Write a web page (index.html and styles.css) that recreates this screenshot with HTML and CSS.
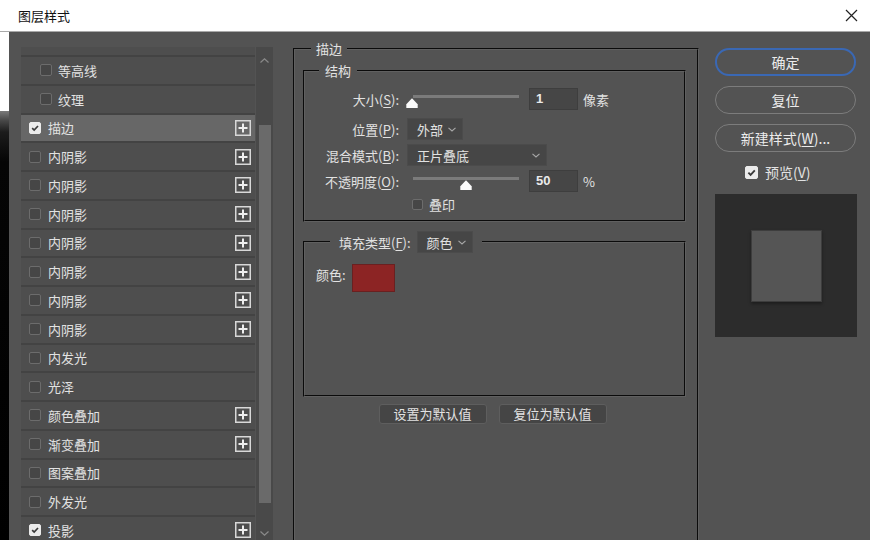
FILE: index.html
```html
<!DOCTYPE html>
<html lang="zh-CN">
<head>
<meta charset="utf-8">
<title>图层样式</title>
<link rel="stylesheet" href="styles.css">
</head>
<body>
<div class="window">
  <header class="titlebar">
    <span class="title">图层样式</span>
    <svg class="close" width="13" height="13" viewBox="0 0 13 13"><path d="M1 1L12 12M12 1L1 12" stroke="#222" stroke-width="1.2"/></svg>
  </header>
  <div class="main">
    <div class="strip"></div>
    <div class="dialog">
      <div class="left">
        <div class="list">
          <div class="list-inner">
            <div class="row"></div>
            <div class="row sub"><span class="cb"></span><span class="txt">等高线</span></div>
            <div class="row sub"><span class="cb"></span><span class="txt">纹理</span></div>
            <div class="row sel"><span class="cb on"><svg viewBox="0 0 12 12"><path d="M2.6 6.2L5 8.6L9.6 3.6" stroke="#3a3a3a" stroke-width="2" fill="none"/></svg></span><span class="txt">描边</span><svg class="plus" viewBox="0 0 16 16"><rect x="0.75" y="0.75" width="14.5" height="14.5" fill="none" stroke="#d8d8d8" stroke-width="1.5"/><path d="M8 3.5V12.5M3.5 8H12.5" stroke="#eee" stroke-width="2"/></svg></div>
            <div class="row"><span class="cb"></span><span class="txt">内阴影</span><svg class="plus" viewBox="0 0 16 16"><rect x="0.75" y="0.75" width="14.5" height="14.5" fill="none" stroke="#d8d8d8" stroke-width="1.5"/><path d="M8 3.5V12.5M3.5 8H12.5" stroke="#eee" stroke-width="2"/></svg></div>
            <div class="row"><span class="cb"></span><span class="txt">内阴影</span><svg class="plus" viewBox="0 0 16 16"><rect x="0.75" y="0.75" width="14.5" height="14.5" fill="none" stroke="#d8d8d8" stroke-width="1.5"/><path d="M8 3.5V12.5M3.5 8H12.5" stroke="#eee" stroke-width="2"/></svg></div>
            <div class="row"><span class="cb"></span><span class="txt">内阴影</span><svg class="plus" viewBox="0 0 16 16"><rect x="0.75" y="0.75" width="14.5" height="14.5" fill="none" stroke="#d8d8d8" stroke-width="1.5"/><path d="M8 3.5V12.5M3.5 8H12.5" stroke="#eee" stroke-width="2"/></svg></div>
            <div class="row"><span class="cb"></span><span class="txt">内阴影</span><svg class="plus" viewBox="0 0 16 16"><rect x="0.75" y="0.75" width="14.5" height="14.5" fill="none" stroke="#d8d8d8" stroke-width="1.5"/><path d="M8 3.5V12.5M3.5 8H12.5" stroke="#eee" stroke-width="2"/></svg></div>
            <div class="row"><span class="cb"></span><span class="txt">内阴影</span><svg class="plus" viewBox="0 0 16 16"><rect x="0.75" y="0.75" width="14.5" height="14.5" fill="none" stroke="#d8d8d8" stroke-width="1.5"/><path d="M8 3.5V12.5M3.5 8H12.5" stroke="#eee" stroke-width="2"/></svg></div>
            <div class="row"><span class="cb"></span><span class="txt">内阴影</span><svg class="plus" viewBox="0 0 16 16"><rect x="0.75" y="0.75" width="14.5" height="14.5" fill="none" stroke="#d8d8d8" stroke-width="1.5"/><path d="M8 3.5V12.5M3.5 8H12.5" stroke="#eee" stroke-width="2"/></svg></div>
            <div class="row"><span class="cb"></span><span class="txt">内阴影</span><svg class="plus" viewBox="0 0 16 16"><rect x="0.75" y="0.75" width="14.5" height="14.5" fill="none" stroke="#d8d8d8" stroke-width="1.5"/><path d="M8 3.5V12.5M3.5 8H12.5" stroke="#eee" stroke-width="2"/></svg></div>
            <div class="row"><span class="cb"></span><span class="txt">内发光</span></div>
            <div class="row"><span class="cb"></span><span class="txt">光泽</span></div>
            <div class="row"><span class="cb"></span><span class="txt">颜色叠加</span><svg class="plus" viewBox="0 0 16 16"><rect x="0.75" y="0.75" width="14.5" height="14.5" fill="none" stroke="#d8d8d8" stroke-width="1.5"/><path d="M8 3.5V12.5M3.5 8H12.5" stroke="#eee" stroke-width="2"/></svg></div>
            <div class="row"><span class="cb"></span><span class="txt">渐变叠加</span><svg class="plus" viewBox="0 0 16 16"><rect x="0.75" y="0.75" width="14.5" height="14.5" fill="none" stroke="#d8d8d8" stroke-width="1.5"/><path d="M8 3.5V12.5M3.5 8H12.5" stroke="#eee" stroke-width="2"/></svg></div>
            <div class="row"><span class="cb"></span><span class="txt">图案叠加</span></div>
            <div class="row"><span class="cb"></span><span class="txt">外发光</span></div>
            <div class="row"><span class="cb on"><svg viewBox="0 0 12 12"><path d="M2.6 6.2L5 8.6L9.6 3.6" stroke="#3a3a3a" stroke-width="2" fill="none"/></svg></span><span class="txt">投影</span><svg class="plus" viewBox="0 0 16 16"><rect x="0.75" y="0.75" width="14.5" height="14.5" fill="none" stroke="#d8d8d8" stroke-width="1.5"/><path d="M8 3.5V12.5M3.5 8H12.5" stroke="#eee" stroke-width="2"/></svg></div>
          </div>
        </div>
        <div class="scrollbar">
          <div class="arrow up"><svg width="9" height="5" viewBox="0 0 9 5"><path d="M0.5 4.5L4.5 0.8L8.5 4.5" stroke="#8a8a8a" stroke-width="1.2" fill="none"/></svg></div>
          <div class="thumb-bar"></div>
          <div class="arrow down"><svg width="9" height="5" viewBox="0 0 9 5"><path d="M0.5 0.5L4.5 4.2L8.5 0.5" stroke="#8a8a8a" stroke-width="1.2" fill="none"/></svg></div>
        </div>
      </div>

      <fieldset class="fs-outer">
        <legend class="lg-outer">描边</legend>
        <fieldset class="fs-struct">
          <legend class="lg-struct">结构</legend>
          <div class="frow r1">
            <span class="lbl">大小(<u>S</u>):</span>
            <div class="slider"><div class="track"></div><svg class="sthumb" style="left: calc(1% - 8px)" width="12" height="10" viewBox="0 0 12 10"><path d="M6 0.3L11.7 6.2V10H0.3V6.2Z" fill="#fafafa"/></svg></div>
            <div class="num">1</div>
            <span class="unit">像素</span>
          </div>
          <div class="frow r2">
            <span class="lbl">位置(<u>P</u>):</span>
            <div class="select w-pos"><span>外部</span><svg width="8" height="5" viewBox="0 0 8 5"><path d="M0.5 0.8L4 4L7.5 0.8" stroke="#a8a8a8" stroke-width="1.1" fill="none"/></svg></div>
          </div>
          <div class="frow r3">
            <span class="lbl">混合模式(<u>B</u>):</span>
            <div class="select w-mode"><span>正片叠底</span><svg width="8" height="5" viewBox="0 0 8 5"><path d="M0.5 0.8L4 4L7.5 0.8" stroke="#a8a8a8" stroke-width="1.1" fill="none"/></svg></div>
          </div>
          <div class="frow r4">
            <span class="lbl">不透明度(<u>O</u>):</span>
            <div class="slider"><div class="track"></div><svg class="sthumb" style="left: calc(50% - 6px)" width="12" height="10" viewBox="0 0 12 10"><path d="M6 0.3L11.7 6.2V10H0.3V6.2Z" fill="#fafafa"/></svg></div>
            <div class="num">50</div>
            <span class="unit">%</span>
          </div>
          <div class="frow r5">
            <span class="cb small"></span><span class="ov">叠印</span>
          </div>
        </fieldset>

        <fieldset class="fs-fill">
          <legend class="lg-fill"><span class="lg-fill-in"><span class="fill-lbl">填充类型(<u>F</u>):</span><span class="select w-fill"><span>颜色</span><svg width="8" height="5" viewBox="0 0 8 5"><path d="M0.5 0.8L4 4L7.5 0.8" stroke="#a8a8a8" stroke-width="1.1" fill="none"/></svg></span></span></legend>
          <div class="color-row">
            <span class="clbl">颜色:</span>
            <span class="swatch"></span>
          </div>
        </fieldset>

        <div class="defaults">
          <button class="dbtn">设置为默认值</button>
          <button class="dbtn">复位为默认值</button>
        </div>
      </fieldset>

      <div class="right">
        <button class="pill ok">确定</button>
        <button class="pill">复位</button>
        <button class="pill">新建样式(<u>W</u>)...</button>
        <div class="preview-row"><span class="cb on big"><svg viewBox="0 0 12 12"><path d="M2.6 6.2L5 8.6L9.6 3.6" stroke="#3a3a3a" stroke-width="2" fill="none"/></svg></span><span>预览(<u>V</u>)</span></div>
        <div class="preview"><div class="sq"></div></div>
      </div>
    </div>
  </div>
</div>
</body>
</html>
```

FILE: styles.css
```css
* { box-sizing: border-box; }
html, body {
  margin: 0;
  padding: 0;
  width: 870px;
  height: 540px;
  overflow: hidden;
  background: #000;
}
body {
  font-family: "Noto Sans CJK SC", "Noto Sans", sans-serif;
  font-size: 13px;
  color: #e2e2e2;
}
u { text-decoration-thickness: 1px; text-underline-offset: 2px; }

.window {
  width: 870px;
  height: 540px;
  display: flex;
  flex-direction: column;
}
.titlebar {
  height: 32px;
  flex: none;
  background: #fff;
  border-bottom: 1px solid #a9a9a9;
  display: flex;
  align-items: center;
  padding-left: 18px;
  padding-right: 12px;
}
.title {
  color: #111;
  font-size: 13px;
  flex: 1;
}
.close { display: block; }

.main {
  flex: 1;
  display: flex;
  min-height: 0;
}
.strip {
  width: 9px;
  flex: none;
  background: linear-gradient(#fff 0, #fff 79px, #7a7a7a 79px, #4a4a4a 88px, #1c1c1c 100px, #050505 130px, #000 100%);
}
.dialog {
  flex: 1;
  background: #535353;
  display: flex;
  overflow: hidden;
}

/* left list */
.left {
  width: 284px;
  flex: none;
  padding: 15px 0 0 12px;
  display: flex;
  align-items: flex-start;
}
.list {
  width: 234px;
  height: 520px;
  overflow: hidden;
  background: #434343;
}
.list-inner {
  margin-top: -18.75px;
  display: flex;
  flex-direction: column;
  gap: 2px;
}
.row {
  height: 26.75px;
  background: #4e4e4e;
  display: flex;
  align-items: center;
  padding-left: 8px;
  padding-right: 4px;
  flex: none;
}
.row.sub { padding-left: 19px; }
.row.sel { background: #676767; }
.row .txt { margin-left: 7px; }
.row.sub .txt { margin-left: 6px; }
.cb {
  width: 12px;
  height: 12px;
  flex: none;
  border: 1px solid #6c6c6c;
  background: #464646;
  border-radius: 2px;
  display: inline-flex;
}
.cb.on {
  background: #ebebeb;
  border-color: #ebebeb;
}
.cb svg { width: 100%; height: 100%; display: block; }
.cb.big { width: 13px; height: 13px; }
.plus {
  width: 16px;
  height: 16px;
  margin-left: auto;
  flex: none;
}

.scrollbar {
  width: 17px;
  height: 520px;
  flex: none;
  margin-left: 1px;
  background: #494949;
  display: flex;
  flex-direction: column;
  align-items: center;
}
.arrow {
  display: flex;
  align-items: center;
  justify-content: center;
  width: 100%;
}
.arrow.up { height: 26px; }
.arrow.down { height: 16px; margin-top: 22px; }
.thumb-bar {
  width: 12px;
  height: 378px;
  margin-top: 52px;
  background: #6a6a6a;
}

/* center */
.fs-outer {
  width: 406px;
  height: 560px;
  flex: none;
  margin: 8px 0 0 0;
  padding: 4px 11px 0 8px;
  border: 2px groove #606060;
  min-width: 0;
}
.lg-outer {
  margin-left: 8px;
  padding: 0 5px;
  line-height: 18px;
  height: 18px;
}
.fs-struct {
  margin: 0;
  padding: 8px 0 5px 0;
  border: 2px groove #606060;
  min-width: 0;
}
.lg-struct {
  margin-left: 14px;
  padding: 0 6px;
  line-height: 18px;
  height: 18px;
}
.frow {
  height: 22px;
  display: flex;
  align-items: center;
}
.r2 { margin-top: 8px; }
.r3, .r4 { margin-top: 4px; }
.r5 { margin-top: 1px; padding-left: 107px; }
.lbl {
  width: 94px;
  text-align: right;
  white-space: nowrap;
  flex: none;
}
.slider {
  position: relative;
  width: 106px;
  height: 22px;
  margin-left: 14px;
  flex: none;
}
.track {
  margin-top: 7px;
  height: 3px;
  background: #7b7b7b;
}
.sthumb {
  position: absolute;
  top: 10px;
}
.num {
  width: 49px;
  height: 22px;
  margin-left: 10px;
  background: #464646;
  border: 1px solid #3e3e3e;
  padding-left: 6px;
  font-family: "Liberation Sans", Arial, sans-serif;
  font-weight: bold;
  font-size: 13px;
  line-height: 20px;
  color: #eaeaea;
  flex: none;
}
.unit { margin-left: 5px; }
.select {
  height: 22px;
  margin-left: 8px;
  background: #464646;
  border: 1px solid #4b4b4b;
  display: flex;
  align-items: center;
  justify-content: space-between;
  padding: 0 6px 0 9px;
  flex: none;
}
.select svg { flex: none; }
.w-pos { width: 56px; }
.w-mode { width: 140px; }
.ov { margin-left: 6px; }
.cb.small { width: 11px; height: 11px; }

.fs-fill {
  margin: 9px 0 0 0;
  padding: 11px 0 103px 11px;
  border: 2px groove #606060;
  min-width: 0;
}
.lg-fill {
  margin-left: 14px;
  padding: 0 9px;
  height: 22px;
}
.lg-fill-in {
  display: inline-flex;
  align-items: center;
  height: 22px;
}
.w-fill { width: 56px; margin-left: 6px; }
.color-row {
  display: flex;
  align-items: flex-start;
  height: 28px;
}
.clbl { width: 36px; line-height: 22px; }
.swatch {
  width: 43px;
  height: 28px;
  background: #8c2424;
  border: 1px solid #6a2020;
}
.defaults {
  margin-top: 7px;
  display: flex;
  justify-content: center;
  gap: 12px;
  padding-right: 4px;
}
.dbtn {
  height: 20px;
  width: 108px;
  background: #454545;
  border: 1px solid #5e5e5e;
  border-radius: 3px;
  font: inherit;
  font-size: 13px;
  color: #e2e2e2;
  padding: 0;
  line-height: 18px;
}

/* right */
.right {
  flex: 1;
  padding: 16px 0 0 16px;
  display: flex;
  flex-direction: column;
  align-items: flex-start;
}
.pill {
  width: 141px;
  height: 28px;
  border-radius: 14px;
  border: 1px solid #7c7c7c;
  background: transparent;
  font: inherit;
  font-size: 14px;
  color: #ececec;
  padding: 0;
  margin-bottom: 10px;
}
.pill.ok {
  border: 2px solid #3a68b4;
}
.preview-row {
  height: 20px;
  display: flex;
  align-items: center;
  gap: 7px;
  padding-left: 30px;
  font-size: 14px;
}
.preview {
  margin-top: 12px;
  width: 142px;
  height: 143px;
  background: #2c2c2c;
  display: flex;
  align-items: center;
  justify-content: center;
}
.sq {
  width: 71px;
  height: 72px;
  background: #555;
  border: 1px solid #3d3d3d;
  box-shadow: 0 2px 3px rgba(0,0,0,0.35);
}
```
